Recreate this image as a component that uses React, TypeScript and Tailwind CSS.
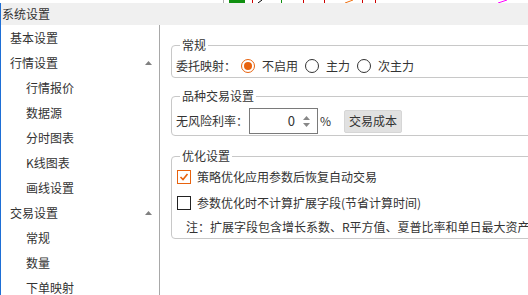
import React from "react";

const font = { fontFamily: '"Noto Sans CJK SC", "Microsoft YaHei", sans-serif' };

function Arrow() {
  return (
    <svg width="7" height="4" viewBox="0 0 7 4" className="mr-[7px]">
      <polygon points="3.5,0 7,4 0,4" fill="#808080" />
    </svg>
  );
}

function Radio({ checked }: { checked?: boolean }) {
  return checked ? (
    <span className="block w-[14px] h-[14px] rounded-full border border-[#e8620d] flex items-center justify-center bg-white">
      <span className="block w-[8px] h-[8px] rounded-full bg-[#e8620d]" />
    </span>
  ) : (
    <span className="block w-[14px] h-[14px] rounded-full border border-[#333] bg-white" />
  );
}

function Check({ checked }: { checked?: boolean }) {
  return checked ? (
    <span className="w-[14px] h-[14px] shrink-0 border border-[#e8620d] flex items-center justify-center bg-white">
      <svg width="10" height="10" viewBox="0 0 10 10">
        <polyline points="1.5,5 4,7.5 8.5,2" fill="none" stroke="#e8620d" strokeWidth="1.6" />
      </svg>
    </span>
  ) : (
    <span className="block w-[14px] h-[14px] shrink-0 border border-[#222] bg-white" />
  );
}

export default function App() {
  const nav: [string, number, boolean?][] = [
    ["基本设置", 0],
    ["行情设置", 0, true],
    ["行情报价", 1],
    ["数据源", 1],
    ["分时图表", 1],
    ["K线图表", 1],
    ["画线设置", 1],
    ["交易设置", 0, true],
    ["常规", 1],
    ["数量", 1],
    ["下单映射", 1],
  ];
  return (
    <div className="w-[528px] h-[295px] overflow-hidden bg-white text-[12px] text-[#333]" style={font}>
      <svg width="528" height="3" className="block">
        <rect x="223" y="0" width="1" height="3" fill="#b0b0b0" />
        <rect x="229" y="0" width="16" height="3" fill="#109010" />
        <rect x="252" y="0" width="1" height="3" fill="#d00000" />
        <line x1="258" y1="3" x2="262" y2="0" stroke="#000" strokeWidth="1" />
        <rect x="281" y="0" width="1" height="3" fill="#109010" />
        <rect x="303" y="0" width="1" height="3" fill="#d00000" />
        <rect x="324" y="0" width="1" height="3" fill="#d00000" />
        <line x1="345" y1="3" x2="353" y2="0" stroke="#f07010" strokeWidth="1" />
        <rect x="362" y="0" width="1" height="3" fill="#d00000" />
        <rect x="375" y="0" width="1" height="3" fill="#d00000" />
        <line x1="498" y1="3" x2="507" y2="0" stroke="#ff00ff" strokeWidth="1" />
      </svg>
      <div className="border-l border-[#1e6fd6] h-[292px] flex flex-col">
        <div className="h-[22px] bg-[#f0f0f0] flex items-center pl-[1px] leading-[16px]">系统设置</div>
        <div className="flex flex-1 min-h-0">
          <div className="w-[158px] shrink-0 flex flex-col">
            {nav.map(([t, lvl, arrow]) => (
              <div
                key={t}
                className={
                  "h-[25px] shrink-0 flex items-center justify-between leading-[16px] " +
                  (lvl ? "pl-[25px]" : "pl-[9px]")
                }
              >
                <span>{t}</span>
                {arrow ? <Arrow /> : null}
              </div>
            ))}
          </div>
          <div className="w-[1px] bg-[#a8a8a8] shrink-0" />
          <div className="flex-1 min-w-0 overflow-hidden pl-[11px] pt-[12px]">
            <div className="w-[420px] flex flex-col">
              <fieldset className="border border-[#c8c8c8] rounded-[4px] pl-[4px]">
                <legend className="ml-[4px] px-[2px] leading-[16px]">常规</legend>
                <div className="h-[22px] mt-[2px] flex items-center leading-[16px]">
                  <span>委托映射：</span>
                  <span className="ml-[5px] flex"><Radio checked /></span>
                  <span className="ml-[7px]">不启用</span>
                  <span className="ml-[7px] flex"><Radio /></span>
                  <span className="ml-[7px]">主力</span>
                  <span className="ml-[7px] flex"><Radio /></span>
                  <span className="ml-[7px]">次主力</span>
                </div>
              </fieldset>
              <fieldset className="border border-[#c8c8c8] rounded-[4px] pl-[4px] mt-[10px]">
                <legend className="ml-[4px] px-[2px] leading-[16px]">品种交易设置</legend>
                <div className="h-[27px] mt-[4px] pb-[1px] flex items-center leading-[16px]">
                  <span>无风险利率：</span>
                  <div className="ml-[1px] w-[69px] h-[26px] border border-[#7a7a7a] flex items-center justify-end pr-[7px] bg-white">
                    <span className="text-[13px]">0</span>
                    <svg width="7" height="11" viewBox="0 0 7 11" className="ml-[8px]">
                      <polygon points="3.5,0 7,4 0,4" fill="#888" />
                      <polygon points="0,7 7,7 3.5,11" fill="#888" />
                    </svg>
                  </div>
                  <span className="ml-[2px]">%</span>
                  <span className="ml-[13px] h-[23px] px-[4px] flex items-center bg-[#e1e1e1] border border-[#d6d6d6] rounded-[2px]">交易成本</span>
                </div>
              </fieldset>
              <fieldset className="border border-[#c8c8c8] rounded-[4px] pl-[4px] mt-[12px]">
                <legend className="ml-[4px] px-[2px] leading-[16px]">优化设置</legend>
                <div className="h-[24px] mt-[1px] flex items-center leading-[16px] pl-[1px]">
                  <Check checked />
                  <span className="ml-[6px]">策略优化应用参数后恢复自动交易</span>
                </div>
                <div className="h-[24px] mt-[2px] flex items-center leading-[16px] pl-[1px]">
                  <Check />
                  <span className="ml-[6px]">参数优化时不计算扩展字段(节省计算时间)</span>
                </div>
                <div className="h-[22px] mt-[1px] flex items-center leading-[16px] pl-[10px] whitespace-nowrap">
                  注：扩展字段包含增长系数、R平方值、夏普比率和单日最大资产回撤等
                </div>
              </fieldset>
            </div>
          </div>
        </div>
      </div>
    </div>
  );
}
